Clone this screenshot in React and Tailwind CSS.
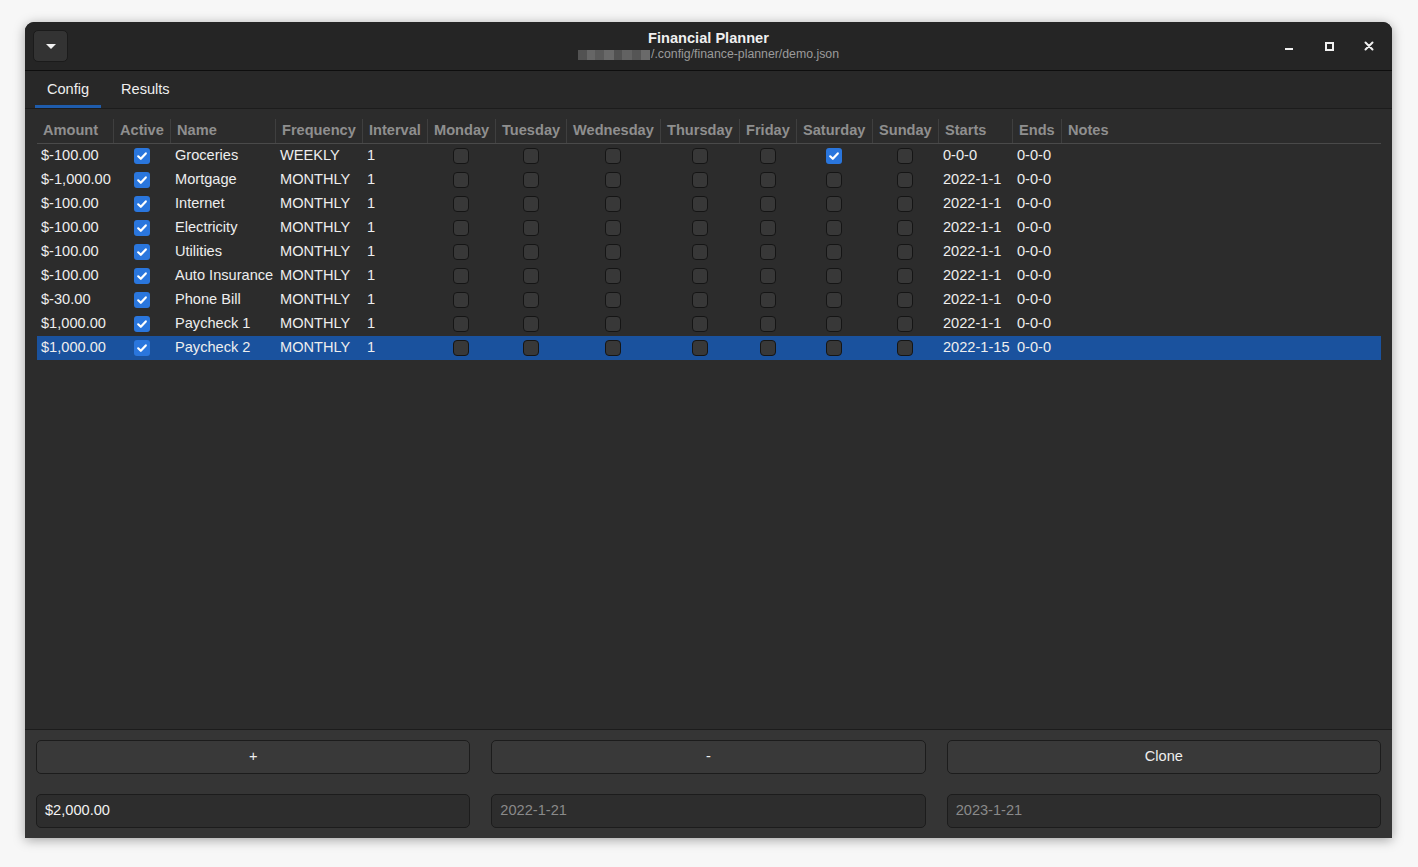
import React from "react";

const cols = "grid-cols-[76px_57px_105px_87px_65px_68px_71px_94px_79px_57px_76px_66px_74px_49px_1fr]";

const headers = ["Amount","Active","Name","Frequency","Interval","Monday","Tuesday","Wednesday","Thursday","Friday","Saturday","Sunday","Starts","Ends","Notes"];

const rows = [
  ["$-100.00","Groceries","WEEKLY","1",[0,0,0,0,0,1,0],"0-0-0","0-0-0"],
  ["$-1,000.00","Mortgage","MONTHLY","1",[0,0,0,0,0,0,0],"2022-1-1","0-0-0"],
  ["$-100.00","Internet","MONTHLY","1",[0,0,0,0,0,0,0],"2022-1-1","0-0-0"],
  ["$-100.00","Electricity","MONTHLY","1",[0,0,0,0,0,0,0],"2022-1-1","0-0-0"],
  ["$-100.00","Utilities","MONTHLY","1",[0,0,0,0,0,0,0],"2022-1-1","0-0-0"],
  ["$-100.00","Auto Insurance","MONTHLY","1",[0,0,0,0,0,0,0],"2022-1-1","0-0-0"],
  ["$-30.00","Phone Bill","MONTHLY","1",[0,0,0,0,0,0,0],"2022-1-1","0-0-0"],
  ["$1,000.00","Paycheck 1","MONTHLY","1",[0,0,0,0,0,0,0],"2022-1-1","0-0-0"],
  ["$1,000.00","Paycheck 2","MONTHLY","1",[0,0,0,0,0,0,0],"2022-1-15","0-0-0"],
];

function Check({ on }) {
  if (on) {
    return (
      <div className="w-[16px] h-[16px] rounded-[3px] bg-[#2a76dd] flex items-center justify-center">
        <svg width="12" height="12" viewBox="0 0 12 12">
          <path d="M2.2 6.3 L4.8 8.8 L9.8 3.4" fill="none" stroke="#ffffff" strokeWidth="2.2" strokeLinecap="round" strokeLinejoin="round" />
        </svg>
      </div>
    );
  }
  return <div className="w-[16px] h-[16px] rounded-[4px] bg-[#383838] border border-[#151515]" />;
}

export default function App() {
  return (
    <div className="w-[1418px] h-[867px] bg-[#f7f7f7] pl-[25px] pt-[22px] overflow-hidden" style={{ fontFamily: '"Liberation Sans", Arial, sans-serif' }}>
      <div className="w-[1367px] h-[816px] flex flex-col rounded-t-[9px] bg-[#2c2c2c] shadow-[0_2px_12px_rgba(0,0,0,0.35)] overflow-hidden">
        {/* Title bar */}
        <div className="h-[49px] shrink-0 bg-[#252525] border-b border-[#0e0e0e] flex items-center px-[8px] relative">
          <div className="w-[35px] h-[32px] rounded-[5px] bg-[#333333] border border-[#1b1b1b] flex items-center justify-center">
            <svg width="12" height="8" viewBox="0 0 12 8"><path d="M1 2 L11 2 L6 7 Z" fill="#f2f2f2" /></svg>
          </div>
          <div className="absolute left-0 right-0 top-[7px] flex flex-col items-center pointer-events-none">
            <div className="text-[14.6px] font-bold text-[#f0f0f0] leading-[18px]">Financial Planner</div>
            <div className="text-[12.3px] text-[#9b9b9b] leading-[15px] flex items-center">
              <span className="inline-flex w-[72px] h-[10px] mr-[1px] opacity-80">
                <span className="w-[9px] h-full bg-[#5e5e5e]" />
                <span className="w-[8px] h-full bg-[#777777]" />
                <span className="w-[9px] h-full bg-[#666666]" />
                <span className="w-[10px] h-full bg-[#7a7a7a]" />
                <span className="w-[8px] h-full bg-[#5c5c5c]" />
                <span className="w-[10px] h-full bg-[#727272]" />
                <span className="w-[9px] h-full bg-[#626262]" />
                <span className="w-[9px] h-full bg-[#7c7c7c]" />
              </span>
              /.config/finance-planner/demo.json
            </div>
          </div>
          <div className="ml-auto flex items-center gap-[22px] pr-[6px]">
            <div className="w-[18px] h-[18px] flex items-center justify-center">
              <div className="w-[8px] h-[2px] bg-[#f0f0f0] mt-[5px]" />
            </div>
            <div className="w-[18px] h-[18px] flex items-center justify-center">
              <div className="w-[9px] h-[9px] border-2 border-[#f0f0f0]" />
            </div>
            <div className="w-[18px] h-[18px] flex items-center justify-center">
              <svg width="10" height="10" viewBox="0 0 10 10"><path d="M1.5 1.5 L8.5 8.5 M8.5 1.5 L1.5 8.5" stroke="#f0f0f0" strokeWidth="2" strokeLinecap="round" /></svg>
            </div>
          </div>
        </div>

        {/* Tabs */}
        <div className="h-[38px] shrink-0 bg-[#282828] border-b border-[#1c1c1c] flex items-stretch pl-[10px]">
          <div className="relative px-[12px] flex items-center text-[14.6px] text-[#eeeeee] w-[66px] justify-center">
            Config
            <div className="absolute left-0 right-0 bottom-0 h-[3px] bg-[#1f5cac]" />
          </div>
          <div className="px-[20px] flex items-center text-[14.6px] text-[#eeeeee]">Results</div>
        </div>

        {/* Content */}
        <div className="flex-1 bg-[#2c2c2c] border-b border-[#1c1c1c] pt-[10px] pl-[12px] pr-[11px]">
          <div className={`grid ${cols} h-[25px] border-b border-[#4a4a4a] text-[14.6px] font-bold text-[#8f8f8f]`}>
            {headers.map((h, i) => (
              <div key={h} className={`flex items-center whitespace-nowrap ${i === 0 ? "pl-[6px]" : "pl-[6px] border-l border-[#3f3f3f]"}`}>{h}</div>
            ))}
          </div>
          {rows.map((r, idx) => {
            const sel = idx === rows.length - 1;
            return (
              <div key={idx} className={`grid ${cols} h-[24px] text-[14.6px] text-[#eeeeee] ${sel ? "bg-[#1a529e]" : ""}`}>
                <div className="flex items-center pl-[4px] whitespace-nowrap">{r[0]}</div>
                <div className="flex items-center justify-center"><Check on /></div>
                <div className="flex items-center pl-[5px] whitespace-nowrap">{r[1]}</div>
                <div className="flex items-center pl-[5px]">{r[2]}</div>
                <div className="flex items-center pl-[5px]">{r[3]}</div>
                {r[4].map((d, j) => (
                  <div key={j} className="flex items-center justify-center"><Check on={!!d} /></div>
                ))}
                <div className="flex items-center pl-[5px] whitespace-nowrap">{r[5]}</div>
                <div className="flex items-center pl-[5px]">{r[6]}</div>
                <div />
              </div>
            );
          })}
        </div>

        {/* Bottom */}
        <div className="h-[108px] shrink-0 bg-[#353535] px-[11px] pt-[10px] flex flex-col gap-[20px]">
          <div className="grid grid-cols-3 gap-[21px]">
            {["+", "-", "Clone"].map((b) => (
              <div key={b} className="h-[34px] rounded-[5px] bg-[#393939] border border-[#1c1c1c] flex items-center justify-center text-[14.6px] text-[#eeeeee]">{b}</div>
            ))}
          </div>
          <div className="grid grid-cols-3 gap-[21px]">
            <div className="h-[34px] rounded-[5px] bg-[#2d2d2d] border border-[#1c1c1c] flex items-center pl-[8px] text-[14.6px] text-[#f2f2f2]">$2,000.00</div>
            <div className="h-[34px] rounded-[5px] bg-[#2d2d2d] border border-[#1c1c1c] flex items-center pl-[8px] text-[14.6px] text-[#8a8a8a]">2022-1-21</div>
            <div className="h-[34px] rounded-[5px] bg-[#2d2d2d] border border-[#1c1c1c] flex items-center pl-[8px] text-[14.6px] text-[#8a8a8a]">2023-1-21</div>
          </div>
        </div>
      </div>
    </div>
  );
}
